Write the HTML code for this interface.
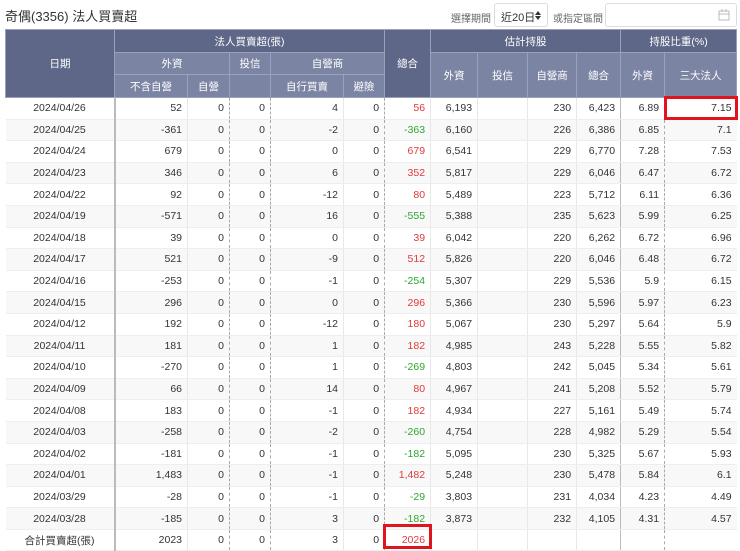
<!DOCTYPE html>
<html><head><meta charset="utf-8"><style>
*{margin:0;padding:0;box-sizing:border-box}
body{width:740px;height:549px;overflow:hidden;background:#fff;font-family:"Liberation Sans","Noto Sans CJK TC",sans-serif;color:#333;position:relative}
.title{position:absolute;left:5px;top:6px;font-size:13px;color:#333}
.ctl{position:absolute;top:10px;font-size:10px;color:#666}
.sel{position:absolute;left:494px;top:3px;width:54px;height:24px;border:1px solid #ddd;border-radius:3px;font-size:11px;padding:5px 0 0 6px;color:#333;white-space:nowrap}
.date{position:absolute;left:605px;top:3px;width:132px;height:24px;border:1px solid #ddd;border-radius:3px}
table{position:absolute;left:5px;top:29px;border-collapse:collapse;table-layout:fixed;width:731px;font-size:10.5px}
th{color:#fff;font-weight:normal;text-align:center;border:1px solid #9aa1bc}
th.d{background:#5e6787}
th.l{background:#7c84a3}
thead tr:nth-child(1) th{height:23px}
thead tr:nth-child(2) th{height:22px}
thead tr:nth-child(3) th{height:23px}
td{height:21.6px;text-align:right;padding-right:5px;border-bottom:1px solid #eee;border-left:1px solid #e8e8e8}
td:first-child{text-align:center;padding:0;border-left:none;border-right:2px solid #bbb}
tbody tr:nth-child(even) td{background:#f8f8f8}
td.ds{border-left:1px dashed #aaa}
td.sl{border-left:1px solid #bbb}
.r{color:#e0393e}.g{color:#2ea82e}
.box{position:absolute;border:3px solid #e0141e}
</style></head><body>
<div class="title">奇偶(3356) 法人買賣超</div>
<div class="ctl" style="left:451px">選擇期間</div>
<div class="sel">近20日<svg style="position:absolute;left:40px;top:7px" width="6" height="9" viewBox="0 0 6 9"><path d="M0 4L3 0L6 4Z M0 5L3 9L6 5Z" fill="#333"/></svg></div>
<div class="ctl" style="left:553px">或指定區間</div>
<div class="date"><svg style="position:absolute;right:6px;top:5px" width="12" height="12" viewBox="0 0 12 12"><rect x="1" y="2" width="10" height="9" fill="none" stroke="#bbb"/><line x1="1" y1="5" x2="11" y2="5" stroke="#bbb"/><line x1="4" y1="0" x2="4" y2="3" stroke="#bbb"/><line x1="8" y1="0" x2="8" y2="3" stroke="#bbb"/></svg></div>
<table>
<colgroup><col style="width:109px"><col style="width:73px"><col style="width:42px"><col style="width:41px"><col style="width:73px"><col style="width:41px"><col style="width:46px"><col style="width:47px"><col style="width:50px"><col style="width:49px"><col style="width:44px"><col style="width:44px"><col style="width:72px"></colgroup>
<thead>
<tr><th class="d" rowspan="3">日期</th><th class="d" colspan="5">法人買賣超(張)</th><th class="d" rowspan="3">總合</th><th class="d" colspan="4">估計持股</th><th class="d" colspan="2">持股比重(%)</th></tr>
<tr><th class="l" colspan="2">外資</th><th class="l">投信</th><th class="l" colspan="2">自營商</th><th class="l" rowspan="2">外資</th><th class="l" rowspan="2">投信</th><th class="l" rowspan="2">自營商</th><th class="l" rowspan="2">總合</th><th class="l" rowspan="2">外資</th><th class="l" rowspan="2">三大法人</th></tr>
<tr><th class="l">不含自營</th><th class="l">自營</th><th class="l"></th><th class="l">自行買賣</th><th class="l">避險</th></tr>
</thead>
<tbody>
<tr><td>2024/04/26</td><td>52</td><td>0</td><td class="ds">0</td><td class="ds">4</td><td>0</td><td class="ds r">56</td><td>6,193</td><td></td><td>230</td><td>6,423</td><td class="sl">6.89</td><td class="ds">7.15</td></tr>
<tr><td>2024/04/25</td><td>-361</td><td>0</td><td class="ds">0</td><td class="ds">-2</td><td>0</td><td class="ds g">-363</td><td>6,160</td><td></td><td>226</td><td>6,386</td><td class="sl">6.85</td><td class="ds">7.1</td></tr>
<tr><td>2024/04/24</td><td>679</td><td>0</td><td class="ds">0</td><td class="ds">0</td><td>0</td><td class="ds r">679</td><td>6,541</td><td></td><td>229</td><td>6,770</td><td class="sl">7.28</td><td class="ds">7.53</td></tr>
<tr><td>2024/04/23</td><td>346</td><td>0</td><td class="ds">0</td><td class="ds">6</td><td>0</td><td class="ds r">352</td><td>5,817</td><td></td><td>229</td><td>6,046</td><td class="sl">6.47</td><td class="ds">6.72</td></tr>
<tr><td>2024/04/22</td><td>92</td><td>0</td><td class="ds">0</td><td class="ds">-12</td><td>0</td><td class="ds r">80</td><td>5,489</td><td></td><td>223</td><td>5,712</td><td class="sl">6.11</td><td class="ds">6.36</td></tr>
<tr><td>2024/04/19</td><td>-571</td><td>0</td><td class="ds">0</td><td class="ds">16</td><td>0</td><td class="ds g">-555</td><td>5,388</td><td></td><td>235</td><td>5,623</td><td class="sl">5.99</td><td class="ds">6.25</td></tr>
<tr><td>2024/04/18</td><td>39</td><td>0</td><td class="ds">0</td><td class="ds">0</td><td>0</td><td class="ds r">39</td><td>6,042</td><td></td><td>220</td><td>6,262</td><td class="sl">6.72</td><td class="ds">6.96</td></tr>
<tr><td>2024/04/17</td><td>521</td><td>0</td><td class="ds">0</td><td class="ds">-9</td><td>0</td><td class="ds r">512</td><td>5,826</td><td></td><td>220</td><td>6,046</td><td class="sl">6.48</td><td class="ds">6.72</td></tr>
<tr><td>2024/04/16</td><td>-253</td><td>0</td><td class="ds">0</td><td class="ds">-1</td><td>0</td><td class="ds g">-254</td><td>5,307</td><td></td><td>229</td><td>5,536</td><td class="sl">5.9</td><td class="ds">6.15</td></tr>
<tr><td>2024/04/15</td><td>296</td><td>0</td><td class="ds">0</td><td class="ds">0</td><td>0</td><td class="ds r">296</td><td>5,366</td><td></td><td>230</td><td>5,596</td><td class="sl">5.97</td><td class="ds">6.23</td></tr>
<tr><td>2024/04/12</td><td>192</td><td>0</td><td class="ds">0</td><td class="ds">-12</td><td>0</td><td class="ds r">180</td><td>5,067</td><td></td><td>230</td><td>5,297</td><td class="sl">5.64</td><td class="ds">5.9</td></tr>
<tr><td>2024/04/11</td><td>181</td><td>0</td><td class="ds">0</td><td class="ds">1</td><td>0</td><td class="ds r">182</td><td>4,985</td><td></td><td>243</td><td>5,228</td><td class="sl">5.55</td><td class="ds">5.82</td></tr>
<tr><td>2024/04/10</td><td>-270</td><td>0</td><td class="ds">0</td><td class="ds">1</td><td>0</td><td class="ds g">-269</td><td>4,803</td><td></td><td>242</td><td>5,045</td><td class="sl">5.34</td><td class="ds">5.61</td></tr>
<tr><td>2024/04/09</td><td>66</td><td>0</td><td class="ds">0</td><td class="ds">14</td><td>0</td><td class="ds r">80</td><td>4,967</td><td></td><td>241</td><td>5,208</td><td class="sl">5.52</td><td class="ds">5.79</td></tr>
<tr><td>2024/04/08</td><td>183</td><td>0</td><td class="ds">0</td><td class="ds">-1</td><td>0</td><td class="ds r">182</td><td>4,934</td><td></td><td>227</td><td>5,161</td><td class="sl">5.49</td><td class="ds">5.74</td></tr>
<tr><td>2024/04/03</td><td>-258</td><td>0</td><td class="ds">0</td><td class="ds">-2</td><td>0</td><td class="ds g">-260</td><td>4,754</td><td></td><td>228</td><td>4,982</td><td class="sl">5.29</td><td class="ds">5.54</td></tr>
<tr><td>2024/04/02</td><td>-181</td><td>0</td><td class="ds">0</td><td class="ds">-1</td><td>0</td><td class="ds g">-182</td><td>5,095</td><td></td><td>230</td><td>5,325</td><td class="sl">5.67</td><td class="ds">5.93</td></tr>
<tr><td>2024/04/01</td><td>1,483</td><td>0</td><td class="ds">0</td><td class="ds">-1</td><td>0</td><td class="ds r">1,482</td><td>5,248</td><td></td><td>230</td><td>5,478</td><td class="sl">5.84</td><td class="ds">6.1</td></tr>
<tr><td>2024/03/29</td><td>-28</td><td>0</td><td class="ds">0</td><td class="ds">-1</td><td>0</td><td class="ds g">-29</td><td>3,803</td><td></td><td>231</td><td>4,034</td><td class="sl">4.23</td><td class="ds">4.49</td></tr>
<tr><td>2024/03/28</td><td>-185</td><td>0</td><td class="ds">0</td><td class="ds">3</td><td>0</td><td class="ds g">-182</td><td>3,873</td><td></td><td>232</td><td>4,105</td><td class="sl">4.31</td><td class="ds">4.57</td></tr>
<tr><td>合計買賣超(張)</td><td>2023</td><td>0</td><td class="ds">0</td><td class="ds">3</td><td>0</td><td class="ds r">2026</td><td></td><td></td><td></td><td></td><td class="sl"></td><td class="ds"></td></tr>
</tbody>
</table>
<div class="box" style="left:664px;top:96px;width:74px;height:24px"></div>
<div class="box" style="left:383px;top:524px;width:49px;height:25px"></div>
</body></html>
